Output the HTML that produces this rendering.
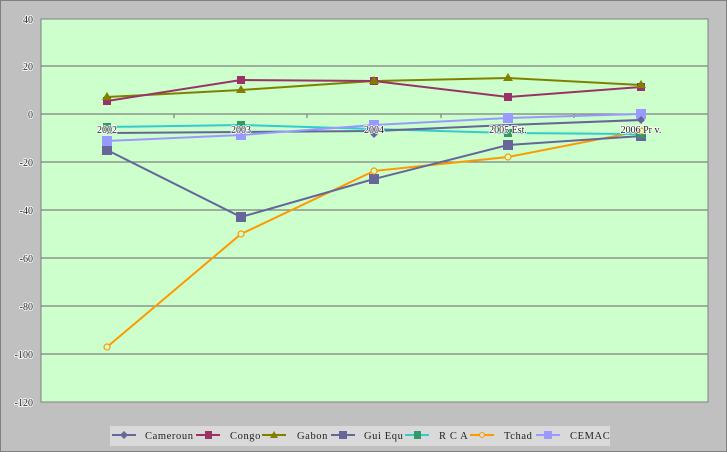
<!DOCTYPE html>
<html><head><meta charset="utf-8"><style>
html,body{margin:0;padding:0;background:#c0c0c0;}
svg{display:block;font-family:"Liberation Serif",serif;}
.h{paint-order:stroke;stroke:#fff;stroke-width:1.5px;}
</style></head><body>
<svg width="727" height="452" viewBox="0 0 727 452" xmlns="http://www.w3.org/2000/svg">
<rect x="0.5" y="0.5" width="726" height="451" fill="#c0c0c0" stroke="#808080"/>
<rect x="41" y="19" width="667" height="383" fill="#ccffcc" stroke="#808080"/>
<g stroke="#808080" stroke-width="1.2">
<line x1="41" y1="66" x2="708" y2="66"/>
<line x1="41" y1="114" x2="708" y2="114"/>
<line x1="41" y1="162" x2="708" y2="162"/>
<line x1="41" y1="210" x2="708" y2="210"/>
<line x1="41" y1="258" x2="708" y2="258"/>
<line x1="41" y1="306" x2="708" y2="306"/>
<line x1="41" y1="354" x2="708" y2="354"/>
<line x1="174" y1="114" x2="174" y2="118"/><line x1="307" y1="114" x2="307" y2="118"/>
<line x1="441" y1="114" x2="441" y2="118"/><line x1="574" y1="114" x2="574" y2="118"/>
</g>
<g font-size="10" fill="#222" text-anchor="end" class="h">
<text x="33" y="23">40</text><text x="33" y="70">20</text><text x="33" y="118">0</text>
<text x="33" y="166">-20</text><text x="33" y="214">-40</text><text x="33" y="262">-60</text>
<text x="33" y="310">-80</text><text x="33" y="358">-100</text><text x="33" y="406">-120</text>
</g>
<g fill="none" stroke-width="2">
<polyline stroke="#ff9900" points="107,347 241,234 374,171 508,157 641,131"/>
<polyline stroke="#666699" points="107,150 241,217 374,179 508,145 641,136"/>
<polyline stroke="#33cccc" points="107,127 241,125 374,129 508,133 641,134"/>
<polyline stroke="#666699" points="107,133 241,132 374,131 508,125 641,120"/>
<polyline stroke="#9999ff" points="107,141 241,135 374,125 508,118 641,114"/>
<polyline stroke="#808000" points="107,97 241,90 374,81 508,78 641,85"/>
<polyline stroke="#993366" points="107,101 241,80 374,81 508,97 641,87"/>
</g>
<g fill="#993366"><rect x="103" y="97" width="8" height="8"/><rect x="237" y="76" width="8" height="8"/><rect x="370" y="77" width="8" height="8"/><rect x="504" y="93" width="8" height="8"/><rect x="637" y="83" width="8" height="8"/></g>
<g fill="#808000"><polygon points="107,92 112,100 102,100"/><polygon points="241,85 246,93 236,93"/><polygon points="374,76 379,84 369,84"/><polygon points="508,73 513,81 503,81"/><polygon points="641,80 646,88 636,88"/></g>
<g fill="#666699"><rect x="102" y="145" width="10" height="10"/><rect x="236" y="212" width="10" height="10"/><rect x="369" y="174" width="10" height="10"/><rect x="503" y="140" width="10" height="10"/><rect x="636" y="131" width="10" height="10"/></g>
<g fill="#339966"><rect x="103" y="123" width="8" height="8"/><rect x="237" y="121" width="8" height="8"/><rect x="504" y="129" width="8" height="8"/><rect x="637" y="130" width="8" height="8"/></g>
<g fill="#9999ff"><rect x="102" y="136" width="10" height="10"/><rect x="236" y="130" width="10" height="10"/><rect x="369" y="120" width="10" height="10"/><rect x="503" y="113" width="10" height="10"/><rect x="636" y="109" width="10" height="10"/></g>
<g fill="#666699"><polygon points="374,130 378,134 374,138 370,134"/><polygon points="641,116 645,120 641,124 637,120"/></g>
<g fill="#ccffcc" stroke="#ff9900" stroke-width="1.2"><circle cx="107" cy="347" r="3"/><circle cx="241" cy="234" r="3"/><circle cx="374" cy="171" r="3"/><circle cx="508" cy="157" r="3"/><circle cx="641" cy="131" r="3"/></g>
<g font-size="10" fill="#222" text-anchor="middle" class="h">
<text x="107" y="133">2002</text><text x="241" y="133">2003</text><text x="374" y="133">2004</text><text x="508" y="133">2005 Est.</text><text x="641" y="133">2006 Pr v.</text>
</g>
<rect x="110" y="426" width="500" height="20" fill="#d9d9d9"/>
<g font-size="10.5" fill="#222" letter-spacing="0.6">
<line x1="112" y1="435" x2="136" y2="435" stroke="#666699" stroke-width="2"/><polygon points="124,431 128,435 124,439 120,435" fill="#666699"/><text x="145" y="439">Cameroun</text>
<line x1="196" y1="435" x2="220" y2="435" stroke="#993366" stroke-width="2"/><rect x="205" y="431" width="7" height="8" fill="#993366"/><text x="230" y="439">Congo</text>
<line x1="262" y1="435" x2="286" y2="435" stroke="#808000" stroke-width="2"/><polygon points="274,431 278,438 270,438" fill="#808000"/><text x="297" y="439">Gabon</text>
<line x1="331" y1="435" x2="355" y2="435" stroke="#666699" stroke-width="2"/><rect x="339" y="431" width="8" height="8" fill="#666699"/><text x="364" y="439">Gui Equ</text>
<line x1="405" y1="435" x2="429" y2="435" stroke="#33cccc" stroke-width="2"/><rect x="414" y="431" width="7" height="8" fill="#339966"/><text x="439" y="439">R C A</text>
<line x1="470" y1="435" x2="494" y2="435" stroke="#ff9900" stroke-width="2"/><circle cx="482" cy="435" r="2.5" fill="#d9d9d9" stroke="#ff9900"/><text x="504" y="439">Tchad</text>
<line x1="536" y1="435" x2="560" y2="435" stroke="#9999ff" stroke-width="2"/><rect x="544" y="431" width="8" height="8" fill="#9999ff"/><text x="570" y="439">CEMAC</text>
</g>
</svg>
</body></html>
